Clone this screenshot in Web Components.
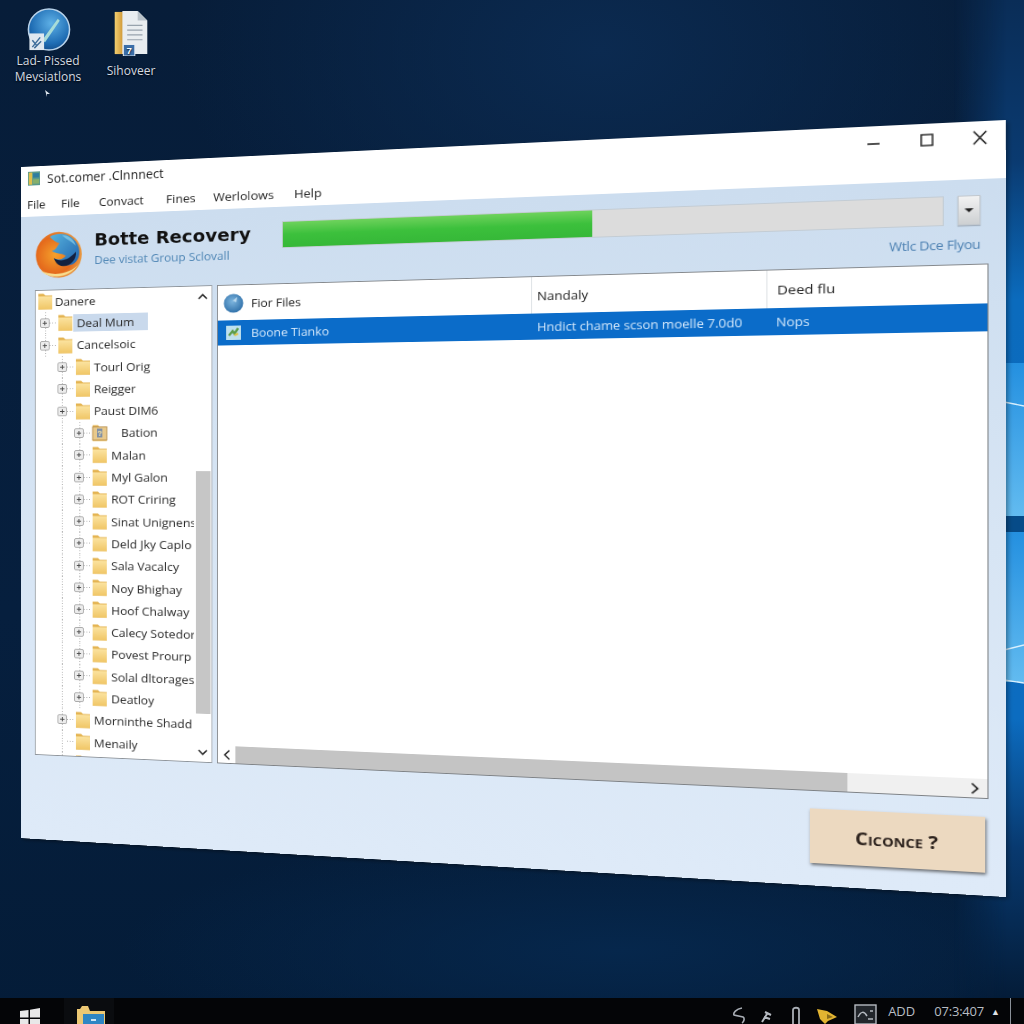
<!DOCTYPE html>
<html>
<head>
<meta charset="utf-8">
<title>Recovery</title>
<style>
  html, body { margin: 0; padding: 0; background: #041a35; }
  body { font-family: "Open Sans", "Liberation Sans", sans-serif; }
</style>
</head>
<body>
<x-desktop>
  <x-desktop-icon slot="icons" x="10" y="8" width="76">
    <svg slot="icon" width="48" height="45" viewBox="0 0 48 46">
      <defs>
        <radialGradient id="g1" cx="55%" cy="35%" r="70%"><stop offset="0" stop-color="#5eb0e6"/><stop offset=".7" stop-color="#1f6db4"/><stop offset="1" stop-color="#124a86"/></radialGradient>
      </defs>
      <circle cx="25" cy="22" r="21" fill="url(#g1)" stroke="#b9d3ea" stroke-width="1.6"/>
      <path d="M18 33 L34 11 L36 13 L21 35 Z" fill="#a8dcd8"/>
      <rect x="5" y="26" width="15" height="17" fill="#dfe8f0"/>
      <path d="M8 40 L16 30 M10 41 L17 34 M8 33 L13 39" stroke="#3f6f9c" stroke-width="1.5" fill="none"/>
    </svg>
    Lad- Pissed<br>Mevsiatlons
  </x-desktop-icon>
  <x-desktop-icon slot="icons" x="100" y="10" width="62" gap="8">
    <svg slot="icon" width="38" height="46" viewBox="0 0 38 48">
      <defs>
        <linearGradient id="g2" x1="0" x2="1"><stop offset="0" stop-color="#f3cf70"/><stop offset="1" stop-color="#c98f2e"/></linearGradient>
      </defs>
      <path d="M2 2 H12 V46 H2 Z" fill="url(#g2)"/>
      <path d="M10 1 H26 L36 11 V46 H10 Z" fill="#e9edf0"/>
      <path d="M26 1 L36 11 H26 Z" fill="#b9c2c9"/>
      <path d="M15 16 H31 M15 21 H31 M15 26 H31 M15 31 H31" stroke="#98a3ad" stroke-width="1.2"/>
      <rect x="11" y="36" width="12" height="12" fill="#3b6ea8" stroke="#e6edf3"/>
      <text x="17" y="46" font-size="10" font-weight="700" text-anchor="middle" fill="#fff" font-family="Liberation Sans">7</text>
    </svg>
    Sihoveer
  </x-desktop-icon>

  <x-window slot="windows" corners="21,167 1006,120 1006,897 21,838">
    <span slot="title">Sot.comer .Clnnnect</span>
    <x-menu-bar slot="menu" items="File|0,File|46,Convact|89,Fines|164,Werlolows|216,Help|303"></x-menu-bar>
    <x-recovery-head slot="head"></x-recovery-head>
    <x-folder-tree slot="tree">
      <x-tree-row level="0" label="Danere" plain></x-tree-row>
      <x-tree-row level="1" label="Deal Mum" selected guides="11"></x-tree-row>
      <x-tree-row level="1" label="Cancelsoic" guides="11"></x-tree-row>
      <x-tree-row level="2" label="Tourl Orig" guides="30"></x-tree-row>
      <x-tree-row level="2" label="Reigger" guides="30"></x-tree-row>
      <x-tree-row level="2" label="Paust DIM6" guides="30"></x-tree-row>
      <x-tree-row level="3" label="Bation" tagged guides="30,50"></x-tree-row>
      <x-tree-row level="3" label="Malan" guides="30,50"></x-tree-row>
      <x-tree-row level="3" label="Myl Galon" guides="30,50"></x-tree-row>
      <x-tree-row level="3" label="ROT Criring" guides="30,50"></x-tree-row>
      <x-tree-row level="3" label="Sinat Unignens" guides="30,50"></x-tree-row>
      <x-tree-row level="3" label="Deld Jky Caplo" guides="30,50"></x-tree-row>
      <x-tree-row level="3" label="Sala Vacalcy" guides="30,50"></x-tree-row>
      <x-tree-row level="3" label="Noy Bhighay" guides="30,50"></x-tree-row>
      <x-tree-row level="3" label="Hoof Chalway" guides="30,50"></x-tree-row>
      <x-tree-row level="3" label="Calecy Sotedor" guides="30,50"></x-tree-row>
      <x-tree-row level="3" label="Povest Prourp" guides="30,50"></x-tree-row>
      <x-tree-row level="3" label="Solal dltorages" guides="30,50"></x-tree-row>
      <x-tree-row level="3" label="Deatloy" guides="30,50"></x-tree-row>
      <x-tree-row level="2" label="Morninthe Shadd" guides="30"></x-tree-row>
      <x-tree-row level="2" label="Menaily" nosign guides="30"></x-tree-row>
      <x-tree-row level="2" label="" nosign guides="30"></x-tree-row>
    </x-folder-tree>
    <x-file-list slot="list"></x-file-list>
    <x-wizard-button slot="action">Ciconce ?</x-wizard-button>
  </x-window>

  <x-task-bar slot="taskbar"></x-task-bar>
</x-desktop>

<script>
// wallpaper, desktop icons, windows and taskbar
class XDesktop extends HTMLElement {
  constructor() {
    super();
    this.attachShadow({ mode: 'open' });
    this.shadowRoot.innerHTML = `
      <style>
        :host {
          display: flex;
          flex-direction: column;
          width: 1024px;
          height: 1024px;
          overflow: hidden;
          position: relative;
          background:
            radial-gradient(420px 280px at 600px 50px, #0b2a50 0%, rgba(11,42,80,0) 100%),
            radial-gradient(500px 120px at 620px 950px, #06274c 0%, rgba(6,39,76,0) 100%),
            linear-gradient(180deg, #071d39 0%, #061f3e 60%, #041c38 100%);
        }
        /* the glowing panes of the wallpaper, mostly behind the window */
        .wall {
          position: absolute; right: 0; top: 0; width: 70px; height: 998px;
          -webkit-mask-image: linear-gradient(90deg, transparent, #000 75%);
          mask-image: linear-gradient(90deg, transparent, #000 75%);
        }
        .cursor { position: absolute; left: 45px; top: 90px; }
        .area { flex: 1; position: relative; }
      </style>
      <svg class="wall" viewBox="0 0 70 998" preserveAspectRatio="none">
        <defs>
          <linearGradient id="edge" x1="0" y1="0" x2="0" y2="1">
            <stop offset="0" stop-color="#0a2d57"/>
            <stop offset=".16" stop-color="#0a3a70"/>
            <stop offset=".3" stop-color="#0b6bbd"/>
            <stop offset=".72" stop-color="#0c6cc0"/>
            <stop offset=".85" stop-color="#08396f"/>
            <stop offset="1" stop-color="#041c38"/>
          </linearGradient>
          <linearGradient id="pane" x1="0" y1="0" x2="0" y2="1">
            <stop offset="0" stop-color="#2490e0"/>
            <stop offset="1" stop-color="#62bbf0"/>
          </linearGradient>
        </defs>
        <rect width="70" height="998" fill="url(#edge)"/>
        <rect y="363" width="70" height="153" fill="url(#pane)"/>
        <rect y="532" width="70" height="150" fill="url(#pane)"/>
        <rect y="516" width="70" height="16" fill="#064b88"/>
        <path d="M50 402 L70 406 M50 650 L70 645 M50 680 L70 683" stroke="#d8f0ff" stroke-width="1.4"/>
      </svg>
      <svg class="cursor" width="5" height="7" viewBox="0 0 5 7"><path d="M0 0 L5 4 L2 4 L2 7 Z" fill="#dfe6ee"/></svg>
      <div class="area">
        <slot name="icons"></slot>
        <slot name="windows"></slot>
      </div>
      <slot name="taskbar"></slot>
    `;
  }
}

class XDesktopIcon extends HTMLElement {
  constructor() {
    super();
    this.attachShadow({ mode: 'open' });
    this.shadowRoot.innerHTML = `
      <style>
        :host {
          display: flex;
          flex-direction: column;
          align-items: center;
          position: absolute;
          color: #d3dae2;
          font: 12px/16px "Open Sans", "Liberation Sans", sans-serif;
          text-align: center;
          text-shadow: 0 1px 2px #000;
        }
        .icon { display: block; height: 45px; margin-bottom: 0; }
      </style>
      <div class="icon"><slot name="icon"></slot></div>
      <div class="label"><slot></slot></div>
    `;
  }
  connectedCallback() {
    this.style.left = this.getAttribute('x') + 'px';
    this.style.top = this.getAttribute('y') + 'px';
    this.style.width = this.getAttribute('width') + 'px';
    this.shadowRoot.querySelector('.icon').style.marginBottom = (this.getAttribute('gap') || 0) + 'px';
  }
}

// flat 985x777 window, warped onto the four corners seen in the photo
class XWindow extends HTMLElement {
  constructor() {
    super();
    this.attachShadow({ mode: 'open' });
    this.shadowRoot.innerHTML = `
      <style>
        :host {
          position: absolute;
          left: 0;
          top: 0;
          width: 985px;
          height: 777px;
          display: flex;
          flex-direction: column;
          transform-origin: 0 0;
          color: #222;
          font: 14px "Open Sans", "Liberation Sans", sans-serif;
          background: #fff;
          box-shadow: 2px 2px 4px rgba(0,0,0,.35);
        }
        .titlebar { height: 30px; display: flex; align-items: center; padding: 0 0 2px 8px; box-sizing: border-box; }
        .app-icon { width: 14px; height: 16px; margin-right: 8px; }
        .title { flex: 1; font-size: 14px; }
        .controls { display: flex; align-items: center; height: 28px; padding: 4px 16px 0 0; box-sizing: border-box; }
        .controls svg { display: block; margin-left: 34px; }
        .body {
          flex: 1;
          display: flex;
          flex-direction: column;
          background: linear-gradient(180deg, #ccddef 0%, #d7e5f4 50%, #deeaf8 100%);
        }
        .panels { display: flex; height: 537px; gap: 5px; padding: 0 15px 0 16px; }
        .footer { display: flex; justify-content: flex-end; padding: 18px 18px 23px 0; }
      </style>
      <div class="titlebar">
        <svg class="app-icon" viewBox="0 0 14 16">
          <rect width="14" height="16" fill="#5a9a8c"/>
          <rect x="1" y="1" width="4" height="14" fill="#e0c04c"/>
          <rect x="6" y="2" width="7" height="5" fill="#2f7da0"/>
          <rect x="6" y="9" width="7" height="5" fill="#86b06c"/>
        </svg>
        <div class="title"><slot name="title"></slot></div>
        <div class="controls">
          <svg width="14" height="14" viewBox="0 0 14 14"><path d="M1 9 H12" stroke="#222" stroke-width="1.6"/></svg>
          <svg width="12" height="13" viewBox="0 0 12 13"><rect x="1" y="1" width="10" height="11" fill="none" stroke="#222" stroke-width="1.4"/></svg>
          <svg width="13" height="15" viewBox="0 0 13 15"><path d="M1 1 L12 14 M12 1 L1 14" stroke="#222" stroke-width="1.3"/></svg>
        </div>
      </div>
      <slot name="menu"></slot>
      <div class="body">
        <slot name="head"></slot>
        <div class="panels">
          <slot name="tree"></slot>
          <slot name="list"></slot>
        </div>
        <div class="footer"><slot name="action"></slot></div>
      </div>
    `;
  }

  connectedCallback() {
    const q = this.getAttribute('corners').split(' ').map(p => p.split(',').map(Number));
    this.style.transform = XWindow.warp(985, 777, q);
  }

  // homography from the w x h rectangle to four corners (tl, tr, br, bl)
  static warp(w, h, [p0, p1, p2, p3]) {
    const dx1 = p1[0] - p2[0], dx2 = p3[0] - p2[0], sx = p0[0] - p1[0] + p2[0] - p3[0];
    const dy1 = p1[1] - p2[1], dy2 = p3[1] - p2[1], sy = p0[1] - p1[1] + p2[1] - p3[1];
    const det = dx1 * dy2 - dx2 * dy1;
    const g = (sx * dy2 - dx2 * sy) / det;
    const k = (dx1 * sy - sx * dy1) / det;
    const a = p1[0] - p0[0] + g * p1[0], b = p3[0] - p0[0] + k * p3[0];
    const d = p1[1] - p0[1] + g * p1[1], e = p3[1] - p0[1] + k * p3[1];
    return `matrix3d(${[a / w, d / w, 0, g / w, b / h, e / h, 0, k / h, 0, 0, 1, 0, p0[0], p0[1], 0, 1].join(',')})`;
  }
}

class XMenuBar extends HTMLElement {
  constructor() {
    super();
    this.attachShadow({ mode: 'open' });
  }
  connectedCallback() {
    // each item is label|left edge, the gaps between them are not even in the window
    const items = this.getAttribute('items').split(',').map(i => i.split('|'));
    let cols = '', cells = '', prev = 7;
    items.forEach(([label, left], n) => {
      const x = Math.max(+left, 7);
      if (n > 0) cols += (x - prev) + 'px ';
      prev = x;
      cells += `<span>${label}</span>`;
    });
    this.shadowRoot.innerHTML = `
      <style>
        :host { display: block; height: 28px; background: #fff; }
        .bar { display: grid; grid-template-columns: ${cols}1fr; align-items: center; height: 28px; padding-left: 7px; font-size: 13.5px; }
      </style>
      <div class="bar">${cells}</div>
    `;
  }
}

class XRecoveryHead extends HTMLElement {
  constructor() {
    super();
    this.attachShadow({ mode: 'open' });
    this.shadowRoot.innerHTML = `
      <style>
        :host {
          display: grid;
          grid-template-columns: 55px 219px 1fr 20px;
          grid-template-rows: 30px 16px;
          row-gap: 12px;
          height: 85px;
          box-sizing: border-box;
          padding: 16px 22px 0 16px;
        }
        .logo { grid-row: 1 / 3; width: 55px; height: 55px; margin-top: 1px; }
        .names { grid-row: 1 / 3; padding-left: 13px; }
        .name { font: 700 20px/26px "DejaVu Sans", sans-serif; color: #111; margin-top: 0; white-space: nowrap; }
        .sub { font-size: 13px; line-height: 20px; color: #4f86b5; margin-top: 0; white-space: nowrap; }
        .bar { background: #dcdcdc; border: 1px solid #c3ccd4; box-sizing: border-box; margin-right: 12px; margin-left: 0; }
        .fill { width: 49.3%; height: 100%; background: linear-gradient(180deg, #6ed25c 0%, #3cc03c 50%, #36b838 100%); }
        .drop {
          background: linear-gradient(180deg, #f2f2f2, #cdd0d2);
          border: 1px solid #c2c8ce;
          box-sizing: border-box;
          box-shadow: 0 1px 1px rgba(0,0,0,.2);
          display: flex; align-items: center; justify-content: center;
        }
        .drop i { width: 0; height: 0; border: 4px solid transparent; border-top-color: #222; border-bottom: 0; }
        .link { grid-column: 3 / 5; text-align: right; font-size: 12.5px; letter-spacing: -.3px; line-height: 16px; color: #4c80b2; }
      </style>
      <svg class="logo" viewBox="0 0 48 48">
        <defs>
          <radialGradient id="fx" cx="42%" cy="50%" r="62%"><stop offset="0" stop-color="#f5a12c"/><stop offset=".65" stop-color="#e4691c"/><stop offset="1" stop-color="#e9a850"/></radialGradient>
          <linearGradient id="gl" x1="0" y1="0" x2="1" y2="1"><stop offset="0" stop-color="#58b4de"/><stop offset="1" stop-color="#1f62ad"/></linearGradient>
        </defs>
        <circle cx="24" cy="24.5" r="23" fill="url(#fx)"/>
        <path d="M15 6 C26 0 40 5 44 18 C46 28 41 34 36 35 C29 37 22 34 19 28 C25 31 29 28 31 26 C27 22 20 24 17 20 C22 20 22 15 25 13 C22 12 18 10 15 6 Z" fill="url(#gl)"/>
        <path d="M19 28 C26 32 34 30 41 22 C42 30 35 37 28 36 C24 36 21 33 19 28 Z" fill="#14213f"/>
        <path d="M27 5 C33 5 39 9 41 16 C36 11 31 9 27 5 Z" fill="#8ad0ea" opacity=".7"/>
        <path d="M6 40 C14 49 34 50 44 34 C38 43 18 47 6 40 Z" fill="#f8dc8e"/>
      </svg>
      <div class="names">
        <div class="name">Botte Recovery</div>
        <div class="sub">Dee vistat Group Sclovall</div>
      </div>
      <div class="bar"><div class="fill"></div></div>
      <div class="drop"><i></i></div>
      <div class="link">Wtlc Dce Flyou</div>
    `;
  }
}

class XFolderTree extends HTMLElement {
  constructor() {
    super();
    this.attachShadow({ mode: 'open' });
    this.shadowRoot.innerHTML = `
      <style>
        :host {
          display: flex;
          width: 199px;
          height: 537px;
          box-sizing: border-box;
          background: #fff;
          border: 1px solid #8f959b;
          border-right-color: #a9afb5;
          border-left-color: #9aa0a6;
        }
        .rows { flex: 1; min-width: 0; overflow: hidden; }
        .scroll { width: 19px; display: flex; flex-direction: column; align-items: center; }
        .arrow { height: 22px; display: flex; align-items: center; justify-content: center; flex: none; }
        .track { flex: 1; width: 16px; }
        .thumb { margin-top: 186px; height: 273px; background: #c6c6c6; }
      </style>
      <div class="rows"><slot></slot></div>
      <div class="scroll">
        <div class="arrow"><svg width="11" height="7" viewBox="0 0 11 7"><path d="M1 6 L5.5 1.5 L10 6" fill="none" stroke="#222" stroke-width="1.6"/></svg></div>
        <div class="track"><div class="thumb"></div></div>
        <div class="arrow"><svg width="11" height="7" viewBox="0 0 11 7"><path d="M1 1 L5.5 5.5 L10 1" fill="none" stroke="#222" stroke-width="1.6"/></svg></div>
      </div>
    `;
  }
}

class XTreeRow extends HTMLElement {
  constructor() {
    super();
    this.attachShadow({ mode: 'open' });
  }
  connectedCallback() {
    const level = +this.getAttribute('level');
    const plain = this.hasAttribute('plain');
    const guides = (this.getAttribute('guides') || '').split(',').filter(Boolean).map(x =>
      `repeating-linear-gradient(180deg, #a5a5a5 0 1px, transparent 1px 3px) ${x}px 0 / 1px 100% no-repeat`).join(',');
    const indent = plain ? 2 : (level - 1) * 19.5 + 5;
    const sign = this.hasAttribute('nosign') ? '<i class="nosign"></i>' : '<i class="sign"></i>';
    const lead = plain ? '' : sign + '<i class="dash"></i>';
    const tag = this.hasAttribute('tagged')
      ? '<rect x="1" y="3" width="16" height="15" fill="#e8c98c" stroke="#b98f4a"/><rect x="6" y="5" width="6" height="10" fill="#7f8fa5"/><text x="9" y="14" font-size="9" font-weight="700" text-anchor="middle" fill="#f4e3a8" font-family="Liberation Sans">?</text>' : '';
    this.shadowRoot.innerHTML = `
      <style>
        :host { display: block; height: 25.3px; }
        .row {
          display: flex;
          align-items: center;
          height: 25.3px;
          box-sizing: border-box;
          padding-left: ${indent}px;
          background: ${guides || 'none'};
          white-space: nowrap;
          font-size: 13.5px;
          color: #2a2a2a;
        }
        .sign { flex: none; width: 11px; height: 11px; box-sizing: border-box; border: 1px solid #a9a9a9; border-radius: 2px; background:
          linear-gradient(#444,#444) center / 5px 1px no-repeat,
          linear-gradient(#444,#444) center / 1px 5px no-repeat, #ececec; }
        .nosign { flex: none; width: 11px; }
        .dash { flex: none; width: 9px; height: 1px; background: repeating-linear-gradient(90deg, #a5a5a5 0 1px, transparent 1px 3px); }
        svg { flex: none; display: block; }
        .label { margin-left: ${this.hasAttribute('tagged') ? 15 : plain ? 2 : 4}px; }
        .sel { background: #c9d9ec; padding: 1px 15px 1px 4px; margin-left: 0; margin-right: 0; }
      </style>
      <div class="row">
        ${lead}
        <svg width="18" height="21" viewBox="0 0 18 20">
          <defs><linearGradient id="fold" x1="0" y1="0" x2="0" y2="1"><stop offset="0" stop-color="#fbe3a0"/><stop offset="1" stop-color="#f0c666"/></linearGradient></defs>
          <path d="M1 1 H7 L9 3 H17 V19 H1 Z" fill="#e4b452"/>
          <path d="M1 4 H17 V19 H1 Z" fill="url(#fold)"/>
          ${tag}
        </svg>
        <span class="label ${this.hasAttribute('selected') ? 'sel' : ''}">${this.getAttribute('label')}</span>
      </div>
    `;
  }
}

class XFileList extends HTMLElement {
  constructor() {
    super();
    this.attachShadow({ mode: 'open' });
    this.shadowRoot.innerHTML = `
      <style>
        :host {
          display: flex;
          flex-direction: column;
          width: 750px;
          height: 537px;
          box-sizing: border-box;
          background: #fff;
          border: 1px solid #85898d;
          border-bottom-color: #7e8286;
          font-size: 13px;
        }
        .cols { display: grid; grid-template-columns: 326px 225px 1fr; align-items: center; }
        .head { height: 39px; }
        .head .cell { border-right: 1px solid #dfe3e6; height: 100%; }
        .head .cell:last-child { border-right: 0; padding-left: 9px; font-size: 13.5px; }
        .cell { display: flex; align-items: center; gap: 7px; padding-left: 5px; white-space: nowrap; box-sizing: border-box; }
        .sel { height: 28px; background: #0b6cc9; color: #d4e8fb; }
        .sel .cell:nth-child(2) { font-size: 12.6px; }
        .sel .cell:last-child { padding-left: 8px; font-size: 12.6px; }
        .fill { flex: 1; }
        .hbar { display: flex; align-items: center; height: 19px; background: #f0f0f0; }
        .hbar .end { width: 19px; display: flex; justify-content: center; flex: none; }
        .hbar .end:first-child { background: #fff; height: 19px; align-items: center; }
        .hbar .thumb { height: 19px; width: 605px; background: #c4c4c4; }
        .hbar .rest { flex: 1; }
      </style>
      <div class="cols head">
        <div class="cell">
          <svg width="24" height="24" viewBox="0 0 24 24">
            <defs><radialGradient id="gb" cx="45%" cy="40%" r="65%"><stop offset="0" stop-color="#7db5de"/><stop offset="1" stop-color="#2c6da7"/></radialGradient></defs>
            <circle cx="12" cy="12" r="10.5" fill="url(#gb)"/>
            <path d="M11 9 L16 5 L15 11 Z" fill="#b8d8ee"/>
          </svg>
          <span>Fior Files</span>
        </div>
        <div class="cell">Nandaly</div>
        <div class="cell">Deed flu</div>
      </div>
      <div class="cols sel">
        <div class="cell">
          <svg width="20" height="18" viewBox="0 0 20 18" style="margin:0 2px">
            <rect x="2" y="1" width="16" height="16" fill="#bfe0ee"/>
            <path d="M5 12 L9 7 L11 10 L15 4" fill="none" stroke="#5b9c48" stroke-width="2.5"/>
            <path d="M11 12 L15 10" stroke="#e2c545" stroke-width="2.5"/>
          </svg>
          <span>Boone Tianko</span>
        </div>
        <div class="cell">Hndict chame scson moelle 7.0d0</div>
        <div class="cell">Nops</div>
      </div>
      <div class="fill"></div>
      <div class="hbar">
        <div class="end"><svg width="8" height="12" viewBox="0 0 8 12"><path d="M6.5 1 L1.5 6 L6.5 11" fill="none" stroke="#222" stroke-width="1.6"/></svg></div>
        <div class="thumb"></div>
        <div class="rest"></div>
        <div class="end" style="width:22px"><svg width="8" height="12" viewBox="0 0 8 12"><path d="M1.5 1 L6.5 6 L1.5 11" fill="none" stroke="#222" stroke-width="1.6"/></svg></div>
      </div>
    `;
  }
}

class XWizardButton extends HTMLElement {
  constructor() {
    super();
    this.attachShadow({ mode: 'open' });
    this.shadowRoot.innerHTML = `
      <style>
        :host {
          display: flex;
          align-items: center;
          justify-content: center;
          width: 156px;
          height: 56px;
          background: #ecd9c0;
          box-shadow: 1px 2px 3px rgba(60,60,60,.7);
          font: 700 18px "Open Sans", sans-serif;
          font-variant: small-caps;
          color: #2b211c;
        }
      </style>
      <slot></slot>
    `;
  }
}

class XTaskBar extends HTMLElement {
  constructor() {
    super();
    this.attachShadow({ mode: 'open' });
    this.shadowRoot.innerHTML = `
      <style>
        :host {
          display: flex;
          height: 26px;
          background: #040507;
          overflow: hidden;
          color: #b8bdc4;
          font: 13px "Open Sans", sans-serif;
          flex: none;
          position: relative;
        }
        .start { width: 64px; padding: 10px 0 0 20px; box-sizing: border-box; flex: none; }
        .app { width: 50px; background: #0a0c0f; padding: 8px 0 0 12px; box-sizing: border-box; flex: none; }
        .tray { margin-left: auto; display: flex; align-items: flex-end; padding-right: 13px; }
        .tray svg { display: block; margin-bottom: 0; }
        .tray > * { flex: none; }
        .tray span { align-self: center; }
        .clock { letter-spacing: -.2px; }
        .line { width: 1px; height: 26px; background: #8a9098; margin-left: 10px; }
      </style>
      <div class="start">
        <svg width="20" height="20" viewBox="0 0 20 20"><path d="M0 3 L8.5 2 V9.5 H0 Z M10 1.7 L20 0 V9.5 H10 Z M0 11 H8.5 V18 L0 17 Z M10 11 H20 V20 L10 18.5 Z" fill="#e8e8e8"/></svg>
      </div>
      <div class="app">
        <svg width="30" height="22" viewBox="0 0 30 22">
          <path d="M1 3 H4 L6 0 H12 L14 5 H29 V22 H1 Z" fill="#ecc874"/>
          <rect x="7" y="8" width="21" height="14" fill="#2f86c4"/>
          <path d="M15 14 L20 14" stroke="#cfe6f5" stroke-width="2"/>
        </svg>
      </div>
      <div class="tray">
        <svg width="18" height="18" viewBox="0 0 16 18"><path d="M11 2 C5 3 2 7 3 9 L12 11 C14 12 13 16 11 17" fill="none" stroke="#a9aeb5" stroke-width="1.6"/></svg>
        <svg width="14" height="16" viewBox="0 0 14 16" style="margin-left:12px"><path d="M2 14 L7 6 M5 4 L11 7 M4 9 L10 11" fill="none" stroke="#b5bac0" stroke-width="2"/></svg>
        <svg width="12" height="18" viewBox="0 0 12 18" style="margin-left:16px"><path d="M3 18 V4 C3 1 9 1 9 4 V18" fill="none" stroke="#a9aeb5" stroke-width="1.8"/></svg>
        <svg width="22" height="16" viewBox="0 0 22 16" style="margin-left:14px"><path d="M1 1 L11 3 L21 9 L12 13 L9 16 L4 11 Z" fill="#e2b431"/><path d="M11 6 L17 9 L11 11 Z" fill="#8b6d1a"/></svg>
        <svg width="23" height="20" viewBox="0 0 23 20" style="margin-left:16px"><rect x="1" y="1" width="21" height="19" fill="#22262b" stroke="#b5bac0" stroke-width="1.4"/><path d="M4 13 C7 7 10 7 13 12 M16 7 H19 M14 15 H19" fill="none" stroke="#b5bac0" stroke-width="1.5"/></svg>
        <span style="margin-left:11px">ADD</span>
        <span class="clock" style="margin-left:19px">07:3:407</span>
        <span style="margin-left:7px;font-size:9px;color:#dfe2e6">&#9650;</span>
        <div class="line"></div>
      </div>
    `;
  }
}

customElements.define('x-desktop', XDesktop);
customElements.define('x-desktop-icon', XDesktopIcon);
customElements.define('x-window', XWindow);
customElements.define('x-menu-bar', XMenuBar);
customElements.define('x-recovery-head', XRecoveryHead);
customElements.define('x-folder-tree', XFolderTree);
customElements.define('x-tree-row', XTreeRow);
customElements.define('x-file-list', XFileList);
customElements.define('x-wizard-button', XWizardButton);
customElements.define('x-task-bar', XTaskBar);
</script>
</body>
</html>
